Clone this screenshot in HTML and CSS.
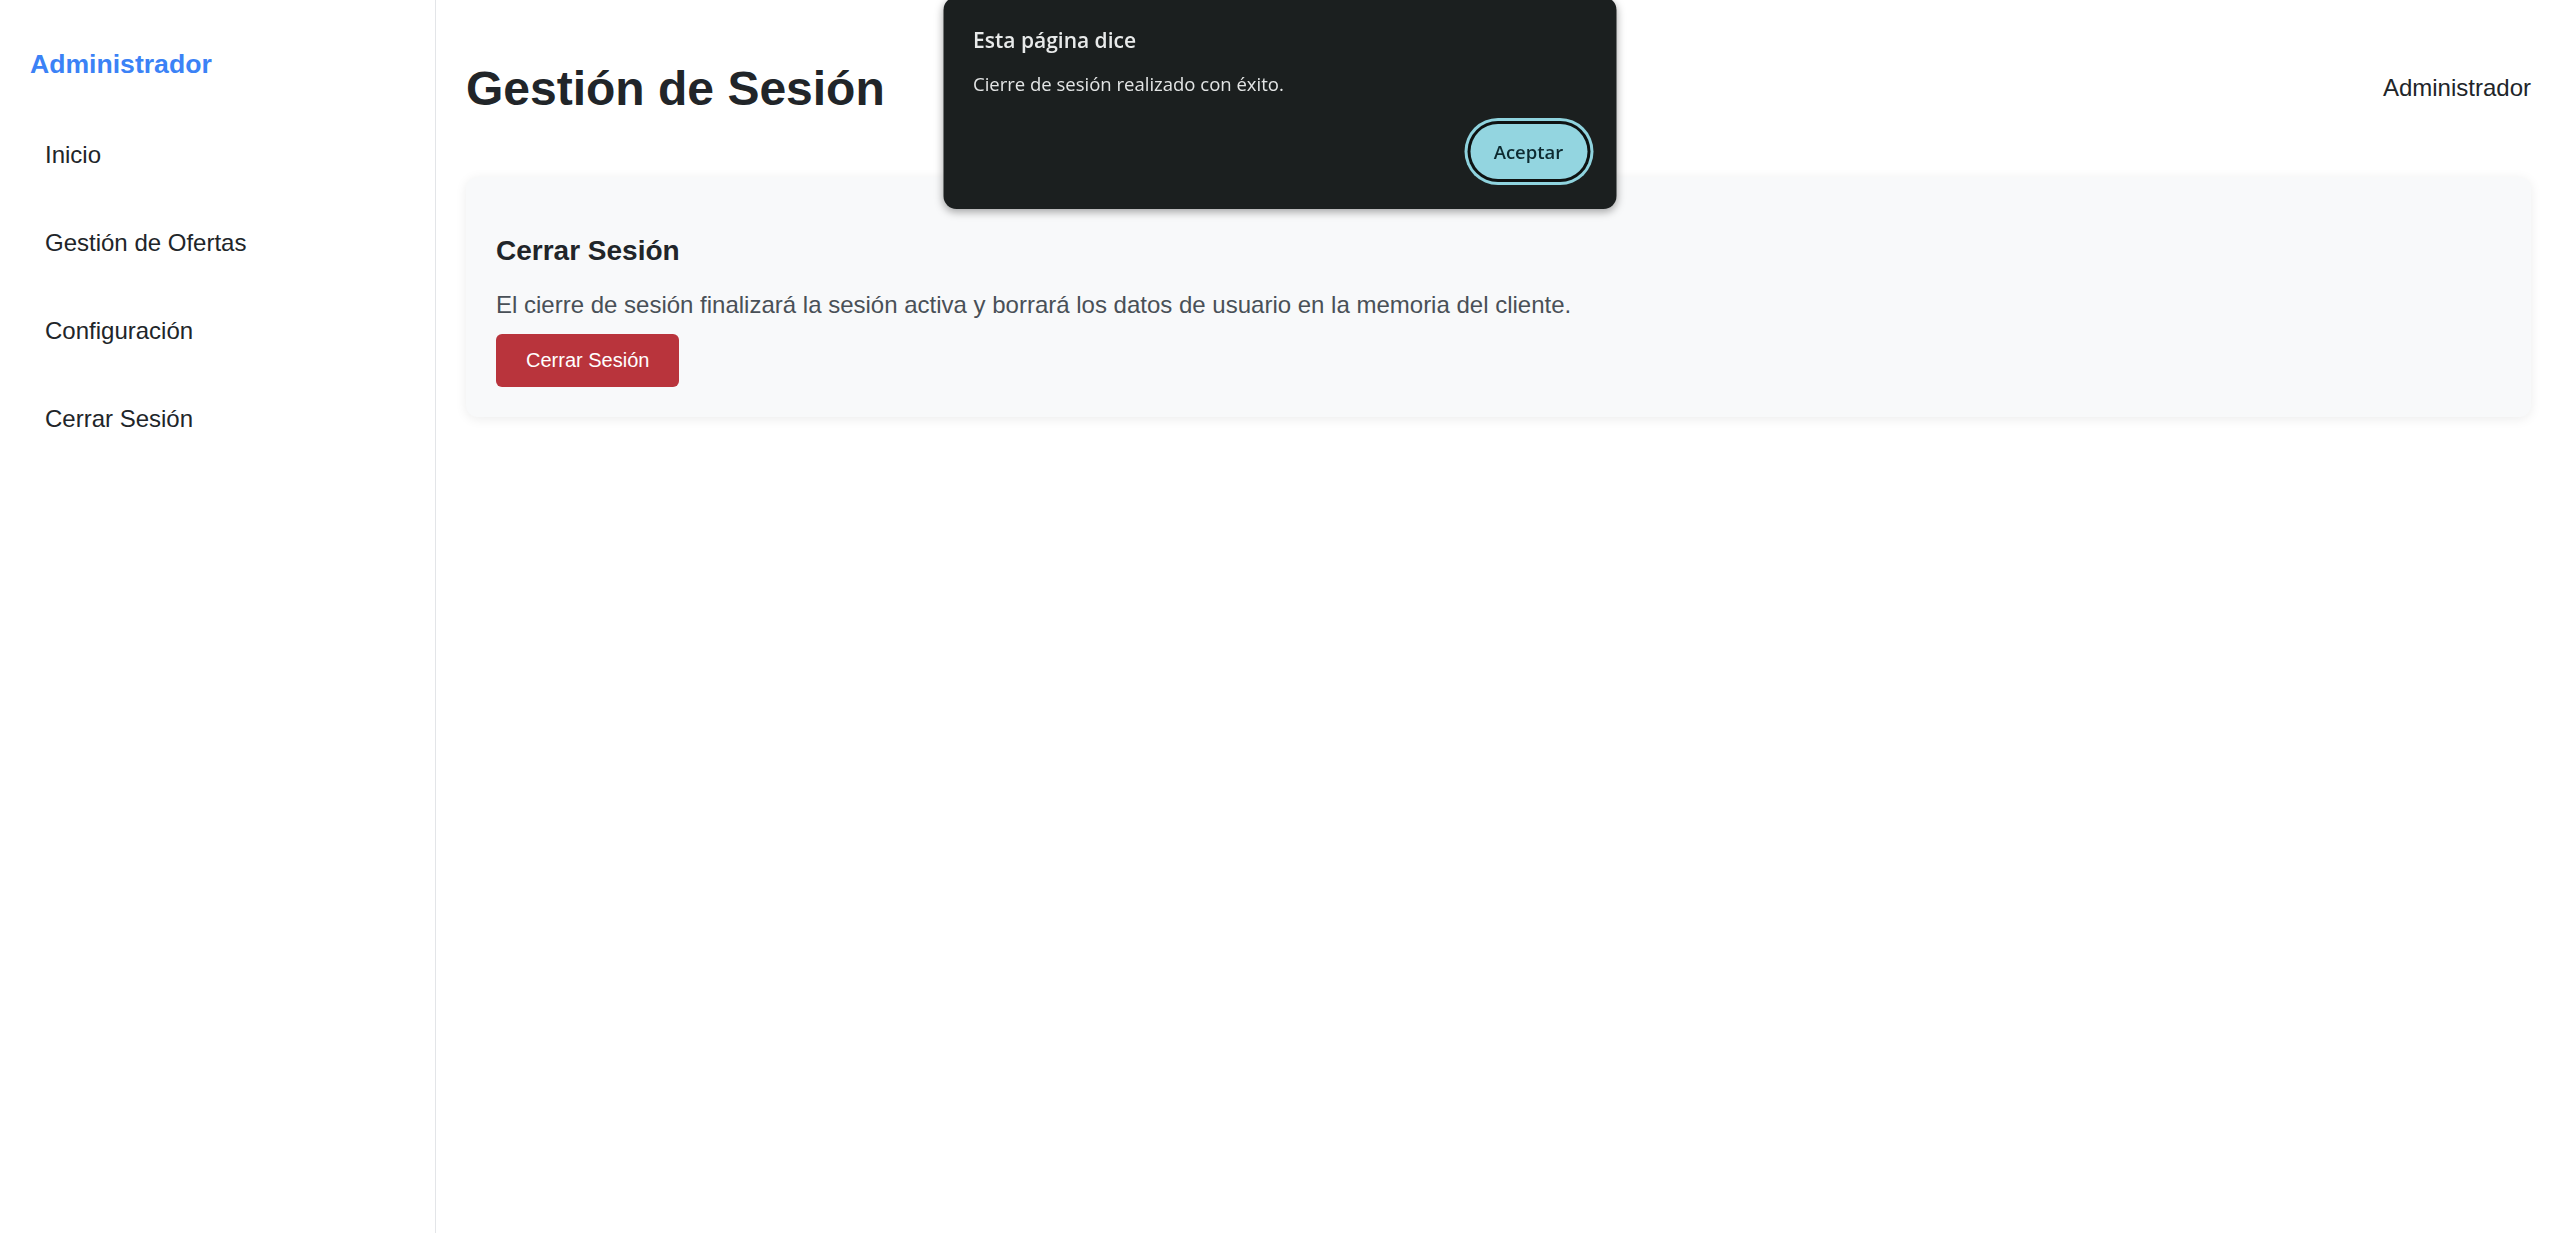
FILE: index.html
```html
<!DOCTYPE html>
<html lang="es">
<head>
<meta charset="utf-8">
<title>Gestión de Sesión</title>
<link rel="stylesheet" href="styles.css">
</head>
<body>
<div class="layout">
  <aside class="sidebar">
    <h2 class="brand">Administrador</h2>
    <nav class="nav">
      <a class="nav-link" href="#">Inicio</a>
      <a class="nav-link" href="#">Gestión de Ofertas</a>
      <a class="nav-link" href="#">Configuración</a>
      <a class="nav-link" href="#">Cerrar Sesión</a>
    </nav>
  </aside>
  <main class="main">
    <header class="topbar">
      <h1 class="page-title">Gestión de Sesión</h1>
      <span class="user">Administrador</span>
    </header>
    <section class="card">
      <h3 class="card-title">Cerrar Sesión</h3>
      <p class="card-text">El cierre de sesión finalizará la sesión activa y borrará los datos de usuario en la memoria del cliente.</p>
      <button class="btn-danger" type="button">Cerrar Sesión</button>
    </section>
  </main>
</div>

<div class="alert-dialog" role="alertdialog">
  <div class="alert-title">Esta página dice</div>
  <div class="alert-message">Cierre de sesión realizado con éxito.</div>
  <div class="alert-actions">
    <button class="alert-ok" type="button">Aceptar</button>
  </div>
</div>
</body>
</html>
```
FILE: styles.css
```css
* {
  box-sizing: border-box;
}

html, body {
  margin: 0;
  padding: 0;
  background: #ffffff;
}

body {
  font-family: "Liberation Sans", Arial, sans-serif;
  color: #212529;
}

.layout {
  display: flex;
  min-height: 100vh;
}

.sidebar {
  width: 436px;
  flex: 0 0 436px;
  border-right: 1px solid #e3e5e8;
  padding: 30px;
}

.brand {
  margin: 19px 0 0 0;
  font-size: 26.6px;
  line-height: 30px;
  font-weight: 700;
  color: #3b82f6;
}

.nav {
  display: flex;
  flex-direction: column;
  gap: 25px;
  margin-top: 44px;
}

.nav-link {
  display: block;
  padding: 18px 15px;
  font-size: 24px;
  line-height: 27px;
  color: #212529;
  text-decoration: none;
}

.main {
  flex: 1;
  padding: 30px 28px 30px 30px;
}

.topbar {
  display: flex;
  justify-content: space-between;
  align-items: center;
  margin-bottom: 29px;
}

.page-title {
  margin: 32px 0;
  font-size: 48px;
  font-weight: 700;
  line-height: 53.6px;
  color: #212529;
}

.user {
  font-size: 24px;
  color: #212529;
  margin-bottom: 2px;
}

.card {
  background: #f8f9fa;
  border-radius: 12px;
  padding: 30px;
  box-shadow: 0 2px 12px rgba(0, 0, 0, 0.08);
}

.card-title {
  margin: 28px 0 24px;
  font-size: 28px;
  line-height: 32px;
  font-weight: 700;
  color: #212529;
}

.card-text {
  margin: 0 0 16px;
  font-size: 24px;
  line-height: 27px;
  color: #495057;
}

.btn-danger {
  display: inline-block;
  border: none;
  border-radius: 6px;
  background: #b9343c;
  color: #ffffff;
  font-family: "Liberation Sans", Arial, sans-serif;
  font-size: 20px;
  line-height: 23px;
  padding: 15px 30px;
  cursor: pointer;
}

/* Browser alert dialog overlay */
.alert-dialog {
  position: fixed;
  top: -3px;
  left: 50%;
  transform: translateX(-50%);
  width: 673px;
  padding: 29px 29px 30px 30px;
  background: #1b1f1f;
  border-radius: 13px;
  box-shadow: 0 3px 8px rgba(0, 0, 0, 0.35);
  font-family: "Open Sans", "Noto Sans", sans-serif;
}

.alert-title {
  font-size: 21px;
  line-height: 28px;
  font-weight: 600;
  color: #e8eaea;
  margin-bottom: 18px;
}

.alert-message {
  font-size: 18.5px;
  line-height: 24px;
  color: #e3e5e5;
}

.alert-actions {
  display: flex;
  justify-content: flex-end;
  margin-top: 28px;
}

.alert-ok {
  width: 117px;
  height: 55px;
  border: none;
  border-radius: 28px;
  background: #93d5e0;
  color: #0d2a30;
  font-family: "Open Sans", "Noto Sans", sans-serif;
  font-size: 18.5px;
  font-weight: 600;
  box-shadow: 0 0 0 3px #0e1212, 0 0 0 6px #8fd3de;
  cursor: pointer;
}
```
